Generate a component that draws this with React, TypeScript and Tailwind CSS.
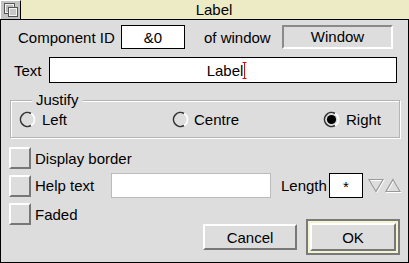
import React from "react";

function Check() {
  return (
    <div className="w-[22px] h-[22px] shrink-0 border-2 border-t-white border-l-white border-r-[#777777] border-b-[#777777] bg-[#dddddd]" />
  );
}

function Radio({ on }: { on?: boolean }) {
  return (
    <svg width="17" height="17" viewBox="0 0 17 17" className="shrink-0">
      <circle cx="8.5" cy="8.5" r="7" fill="#dddddd" />
      <path d="M12 2.44 A7 7 0 1 0 12 14.56" fill="none" stroke="#333333" strokeWidth="1.6" />
      <path d="M12 2.44 A7 7 0 0 1 12 14.56" fill="none" stroke="#ffffff" strokeWidth="1.6" />
      {on && <circle cx="8.5" cy="8.5" r="4.6" fill="#000000" />}
    </svg>
  );
}

export default function App() {
  return (
    <div className="w-[409px] h-[263px] flex flex-col font-['Liberation_Sans',Arial,sans-serif] text-[15px] text-black leading-none overflow-hidden">
      {/* Title bar */}
      <div className="flex h-[20px] shrink-0 border-b border-black">
        <div className="w-[21px] h-full border-r border-black bg-[#c4c4c4] border-t border-l border-t-white border-l-white flex items-center justify-center">
          <svg width="16" height="16" viewBox="0 0 16 16">
            <rect x="1.5" y="1.5" width="10" height="10" fill="#bdbdbd" stroke="#555555" />
            <rect x="2.5" y="2.5" width="8" height="8" fill="none" stroke="#ffffff" strokeWidth="0.8" />
            <rect x="5.5" y="5.5" width="9" height="9" fill="#c8c8c8" stroke="#555555" />
            <rect x="6.5" y="6.5" width="7" height="7" fill="none" stroke="#ffffff" strokeWidth="0.8" />
          </svg>
        </div>
        <div className="flex-1 bg-[#ecebc6] flex items-center justify-center pr-[2px]">Label</div>
      </div>

      {/* Body */}
      <div className="flex-1 flex flex-col bg-[#dddddd] border-l border-r border-b border-black">
        {/* Row 1 */}
        <div className="flex items-center mt-[5px] h-[24px]">
          <span className="w-[120px] pl-[17px]">Component ID</span>
          <div className="w-[64px] h-[24px] border border-black bg-white flex items-center justify-center">&amp;0</div>
          <span className="w-[97px] pl-[19px]">of window</span>
          <div className="w-[111px] h-[24px] border-2 border-t-[#8a8a8a] border-l-[#8a8a8a] border-b-white border-r-white flex items-center justify-center pb-[2px]">
            Window
          </div>
        </div>

        {/* Row 2 */}
        <div className="flex items-center mt-[8px] h-[26px]">
          <span className="w-[48px] pl-[13px]">Text</span>
          <div className="w-[348px] h-[26px] border border-black bg-white flex items-center justify-center pl-[8px]">
            <span>Label</span>
            <svg width="5" height="17" viewBox="0 0 5 17" className="ml-[-1px]">
              <path d="M0.5 0.5 H4.5 M2.5 0.5 V16.5 M0.5 16.5 H4.5" stroke="#cc1111" strokeWidth="1" fill="none" />
            </svg>
          </div>
        </div>

        {/* Justify group */}
        <div className="relative mt-[17px] ml-[9px] w-[390px] h-[38px] shrink-0 border border-[#b4b4b4] shadow-[inset_1px_1px_0_#ffffff,1px_1px_0_#ffffff]">
          <span className="absolute left-[21px] top-[-9px] px-[4px] bg-[#dddddd]">Justify</span>
          <div className="flex items-center h-full">
            <div className="w-[161px] pl-[8px] flex items-center gap-[6px]">
              <Radio />
              <span>Left</span>
            </div>
            <div className="w-[151px] flex items-center gap-[5px]">
              <Radio />
              <span>Centre</span>
            </div>
            <div className="flex items-center gap-[6px]">
              <Radio on />
              <span>Right</span>
            </div>
          </div>
        </div>

        {/* Display border */}
        <div className="flex items-center mt-[9px] ml-[8px] h-[22px]">
          <Check />
          <span className="ml-[4px]">Display border</span>
        </div>

        {/* Help text */}
        <div className="flex items-center mt-[4px] h-[25px]">
          <div className="ml-[8px]">
            <Check />
          </div>
          <span className="w-[80px] pl-[4px]">Help text</span>
          <div className="w-[160px] h-[25px] border border-[#bbbbbb] bg-white" />
          <span className="w-[58px] pl-[10px]">Length</span>
          <div className="w-[34px] h-[25px] border border-black bg-white flex items-start justify-center pt-[5px]">*</div>
          <svg width="34" height="15" viewBox="0 0 34 15" className="ml-[5px]">
            <path d="M1 1.5 H15 L8 13.5 Z" fill="none" stroke="#ffffff" strokeWidth="1.2" transform="translate(0.8,0.8)" />
            <path d="M1 1.5 H15 L8 13.5 Z" fill="none" stroke="#9a9a9a" strokeWidth="1.2" />
            <path d="M25 1.5 L32 13.5 H18 Z" fill="none" stroke="#ffffff" strokeWidth="1.2" transform="translate(0.8,0.8)" />
            <path d="M25 1.5 L32 13.5 H18 Z" fill="none" stroke="#9a9a9a" strokeWidth="1.2" />
          </svg>
        </div>

        {/* Bottom */}
        <div className="flex items-start">
          <div className="flex items-center mt-[5px] ml-[8px] h-[22px]">
            <Check />
            <span className="ml-[4px]">Faded</span>
          </div>
          <div className="ml-auto mr-[8px] mt-[21px] flex items-center gap-[9px]">
            <div className="w-[94px] h-[26px] border-2 border-t-white border-l-white border-r-[#777777] border-b-[#777777] bg-[#dddddd] flex items-center justify-center">
              Cancel
            </div>
            <div className="w-[94px] h-[36px] border-2 border-[#7a7a7a] bg-[#f4f4d0] p-[2px]">
              <div className="w-full h-full border-2 border-t-white border-l-white border-r-[#777777] border-b-[#777777] bg-[#dddddd] flex items-center justify-center">
                OK
              </div>
            </div>
          </div>
        </div>
      </div>
    </div>
  );
}
